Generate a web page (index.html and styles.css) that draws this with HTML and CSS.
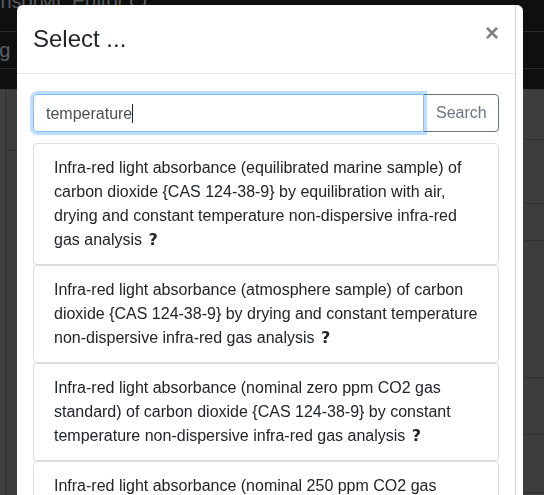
FILE: index.html
```html
<!DOCTYPE html>
<html lang="en">
<head>
<meta charset="utf-8">
<title>SensorML Editor</title>
<link rel="stylesheet" href="styles.css">
</head>
<body>
<div class="page">
  <header class="navbar">
    <div class="brand">SensorML Editor <span class="info">i</span></div>
    <div class="nav-row"><span class="login">Log In</span></div>
  </header>
  <main class="main">
    <div class="strip"></div>
    <div class="leftpane"><div class="lrow"></div></div>
    <div class="rightpane">
      <div class="rrow r1"></div>
      <div class="rrow r2"></div>
      <div class="rrow r3"></div>
      <div class="rrow r4"></div>
      <div class="rrow r5"></div>
      <div class="rrow r6"></div>
    </div>
  </main>
</div>

<div class="modal">
  <div class="modal-content">
    <div class="panel">
      <div class="modal-header">
        <h4 class="modal-title">Select ...</h4>
        <span class="close">×</span>
      </div>
      <div class="modal-body">
        <div class="input-group">
          <div class="search-field">temperature<span class="caret"></span></div>
          <button class="search-btn" type="button">Search</button>
        </div>
        <div class="list">
          <div class="item">Infra-red light absorbance (equilibrated marine sample) of carbon dioxide {CAS 124-38-9} by equilibration with air, drying and constant temperature non-dispersive infra-red gas analysis <b class="help">?</b></div>
          <div class="item">Infra-red light absorbance (atmosphere sample) of carbon dioxide {CAS 124-38-9} by drying and constant temperature non-dispersive infra-red gas analysis <b class="help">?</b></div>
          <div class="item">Infra-red light absorbance (nominal zero ppm CO2 gas standard) of carbon dioxide {CAS 124-38-9} by constant temperature non-dispersive infra-red gas analysis <b class="help">?</b></div>
          <div class="item">Infra-red light absorbance (nominal 250 ppm CO2 gas standard) of carbon dioxide {CAS 124-38-9} by constant temperature non-dispersive infra-red gas analysis <b class="help">?</b></div>
        </div>
      </div>
    </div>
  </div>
</div>
</body>
</html>
```

FILE: styles.css
```css
html, body {
  margin: 0;
  padding: 0;
  height: 100%;
  overflow: hidden;
}
body {
  font-family: "Liberation Sans", Arial, sans-serif;
  background: #3d3d3d;
  color: #212529;
}
.page {
  display: flex;
  flex-direction: column;
  height: 100%;
}
.navbar {
  height: 89px;
  background: #0e0f10;
  overflow: hidden;
  flex: none;
}
.brand {
  font-size: 20px;
  line-height: 24px;
  color: #5a5b5c;
  margin: -11px 0 0 -24px;
  white-space: nowrap;
  height: 29px;
  padding-bottom: 1px;
}
.info {
  display: inline-block;
  width: 12px;
  height: 12px;
  border: 2px solid #5a5b5c;
  border-radius: 50%;
  font-size: 0;
}
.nav-row {
  margin-top: 12px;
  border-top: 1px solid #2a2b2c;
  border-bottom: 1px solid #2a2b2c;
  height: 36px;
  line-height: 36px;
  font-size: 20px;
  color: #5f6061;
  white-space: nowrap;
}
.login {
  margin-left: -23px;
}
.main {
  flex: 1;
  display: flex;
}
.strip {
  width: 5px;
  background: #404040;
  border-right: 1px solid #303030;
}
.leftpane {
  flex: 1;
}
.lrow {
  height: 61px;
  border-bottom: 1px solid #303030;
}
.rightpane {
  width: 21px;
}
.rrow {
  border-bottom: 1px solid #303030;
}
.r1 { height: 50px; }
.r2 { height: 63px; }
.r3 { height: 36px; }
.r4 { height: 136px; }
.r5 { height: 56px; }
.r6 { height: 57px; }

.modal {
  position: fixed;
  top: 5px;
  left: 17px;
  width: 506px;
  bottom: -40px;
}
.modal-content {
  height: 100%;
  background: #fff;
  border-radius: 6px;
  overflow: hidden;
  display: flex;
}
.panel {
  width: 498px;
  border-right: 1px solid #cfcfcf;
  flex: none;
}
.modal-header {
  display: flex;
  align-items: flex-start;
  justify-content: space-between;
  padding: 16px;
  border-bottom: 1px solid #e4e6e8;
}
.modal-title {
  margin: 0;
  font-size: 24px;
  line-height: 36px;
  font-weight: 500;
  color: #212529;
}
.close {
  font-size: 24px;
  font-weight: 700;
  line-height: 1;
  color: #000;
  opacity: 0.5;
}
.modal-body {
  padding: 20px 16px 0 16px;
}
.input-group {
  display: flex;
  margin-bottom: 11px;
}
.search-field {
  flex: 1;
  height: 38px;
  box-sizing: border-box;
  padding: 7px 12px 5px;
  font-size: 16px;
  line-height: 24px;
  color: #495057;
  border: 1px solid #80bdff;
  border-radius: 4px 0 0 4px;
  box-shadow: 0 0 0 3px rgba(0, 123, 255, 0.25);
  position: relative;
  z-index: 1;
}
.caret {
  display: inline-block;
  width: 1px;
  height: 19px;
  background: #222;
  vertical-align: -4px;
}
.search-btn {
  width: 76px;
  height: 38px;
  font-family: inherit;
  font-size: 16px;
  color: #6c757d;
  background: #fff;
  border: 1px solid #6c757d;
  border-radius: 0 4px 4px 0;
  margin-left: -1px;
  padding: 6px 12px;
}
.item {
  border: 1px solid #dcdcdc;
  border-radius: 4px;
  padding: 12px 20px;
  font-size: 16px;
  line-height: 24px;
}
.help {
  font-weight: 900;
  font-size: 16px;
  font-family: "DejaVu Sans", sans-serif;
  margin-left: 2px;
}
```
